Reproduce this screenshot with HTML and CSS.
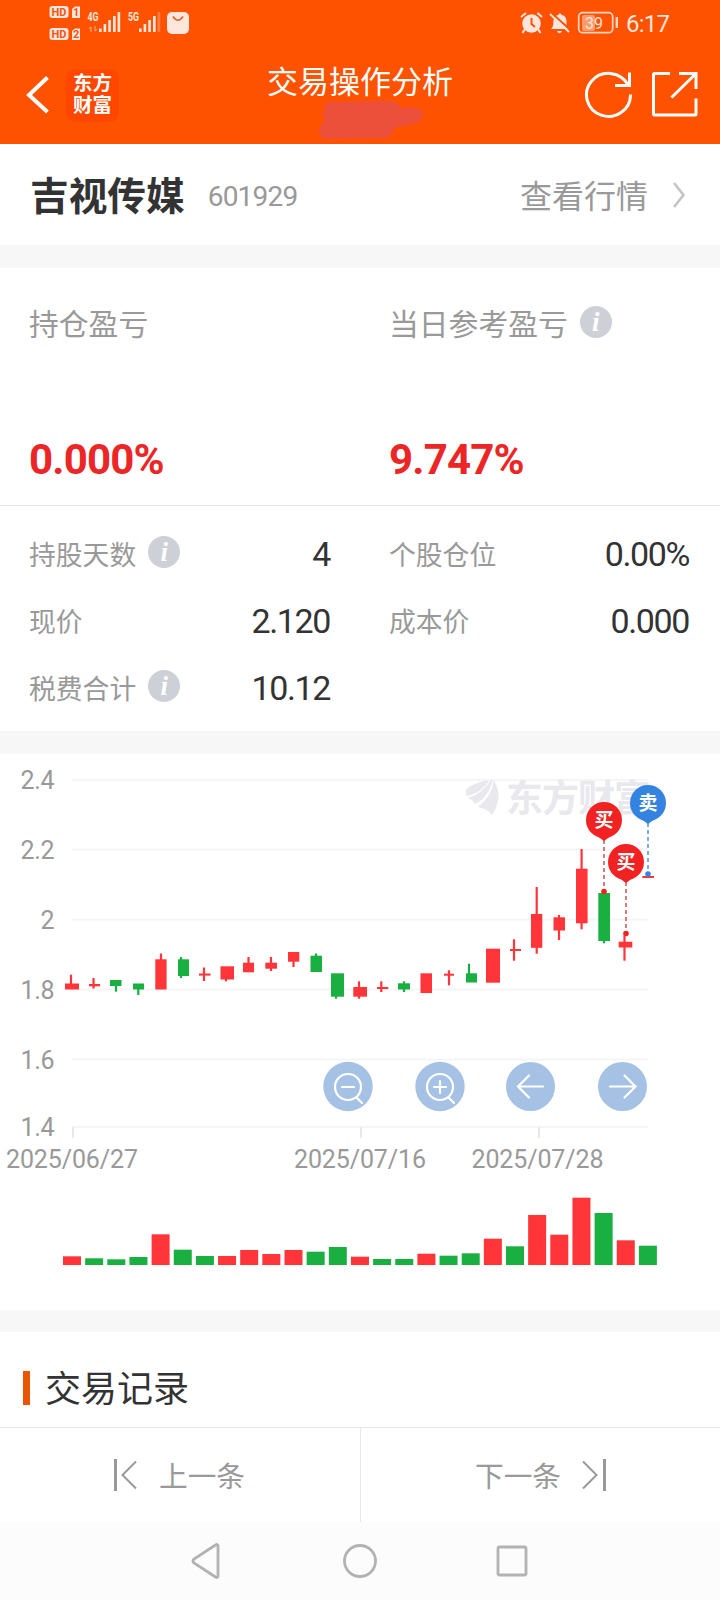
FILE: index.html
```
<!DOCTYPE html>
<html lang="zh-CN">
<head>
  <meta charset="UTF-8">
  <meta name="viewport" content="width=device-width, initial-scale=1.0">
  <title>交易操作分析</title>
  <link rel="stylesheet" href="styles.css">
</head>
<body>
  <header class="header">
    <div class="status-bar">
      <svg class="status-left" width="150" height="40" viewBox="45 0 150 40">
        <g fill="#ffe6dc">
          <rect x="49.5" y="6" width="19" height="12" rx="3"/>
          <path d="M72 9l3-2.500h5V18h-8z"/>
          <rect x="49.5" y="28" width="19" height="12" rx="3"/>
          <path d="M72 31l3-2.500h5V40h-8z"/>
          <rect x="167" y="12" width="22" height="22" rx="5"/>
          <rect x="99" y="28.500" width="2.600" height="3.500"/>
          <rect x="103.600" y="24" width="2.600" height="8"/>
          <rect x="108.300" y="20" width="2.600" height="12"/>
          <rect x="113" y="16" width="2.600" height="16"/>
          <rect x="117.600" y="12" width="2.600" height="20"/>
          <rect x="139" y="28.500" width="2.600" height="3.500"/>
          <rect x="143.600" y="24" width="2.600" height="8"/>
          <rect x="148.300" y="20" width="2.600" height="12"/>
          <rect x="153" y="16" width="2.600" height="16"/>
          <rect x="157.600" y="12" width="2.600" height="20" opacity=".3"/>
        </g>
        <path d="M173 16.500q5 7.500 10 0" fill="none" stroke="#e85a1c" stroke-width="1.500"/>
        <path d="M91 32v-5l-2 1.500M95 26v5l2-1.500" fill="none" stroke="#ffb08a" stroke-width="1"/>
        <g class="status-hd">
          <text x="51.500" y="16" textLength="15">HD</text>
          <text x="73" y="16.300">1</text>
          <text x="51.500" y="38" textLength="15">HD</text>
          <text x="73" y="38.300">2</text>
        </g>
        <g class="status-net">
          <text x="87.500" y="21" textLength="11" lengthAdjust="spacingAndGlyphs">4G</text>
          <text x="128" y="21" textLength="11" lengthAdjust="spacingAndGlyphs">5G</text>
        </g>
      </svg>
      <svg width="160" height="40" viewBox="515 0 160 40">
        <g fill="#ffe6dc">
          <circle cx="531.500" cy="23.500" r="9.300"/>
          <path d="M525 29l-2.500 4M538 29l2.500 4" stroke="#ffe6dc" stroke-width="2"/>
          <path d="M521 17l5-4M537.500 13l4.500 4" stroke="#ffe6dc" stroke-width="2"/>
          <path d="M551 29c3-3 2-6 2.500-9 .5-3 3-5 5-5 0-2 3-2 3 0 3 0 5 3 5 6 0 4 0 5 2.500 8z"/>
          <path d="M557 31h5q-2.500 4.500-5 0z"/>
        </g>
        <path d="M531.500 18v6l3.500 3" fill="none" stroke="#ff5200" stroke-width="2"/>
        <path d="M551.500 13l19 17" stroke="#ff5200" stroke-width="2"/>
        <path d="M550 14l19 18" stroke="#ffe6dc" stroke-width="1.800"/>
        <rect x="582" y="15" width="13" height="16" rx="2" fill="#ff9a6b"/>
        <rect x="578.700" y="12.700" width="34" height="20" rx="4" fill="none" stroke="#ffd6c4" stroke-width="1.700"/>
        <path d="M616.800 17v11" stroke="#ffd6c4" stroke-width="2.400"/>
        <text class="battery" x="585" y="28.500" textLength="18">39</text>
        <text class="clock" x="626" y="32" textLength="44">6:17</text>
      </svg>
    </div>
    <div class="navbar">
      <div class="nav-left">
        <svg width="24" height="42" viewBox="0 0 24 42"><path d="M22.500 3.500L4 21l18.500 17" fill="none" stroke="#fff" stroke-width="4"/></svg>
        <div class="brand"><span>东方</span><span>财富</span></div>
      </div>
      <div class="nav-center">
        <h1>交易操作分析</h1>
        <svg class="smudge" width="108" height="40" viewBox="0 0 108 40">
          <path d="M9 2l61-1q12 0 12 7 24-3 23 7-1 9-21 11-9 1-10 7-2 6-11 5L9 39Q0 37 1 29q1-5 6-6-3-8-1-14z" fill="#ec503b"/>
        </svg>
      </div>
      <div class="nav-right">
        <svg width="48" height="48" viewBox="0 0 48 48" fill="none" stroke="#fff" stroke-width="3">
          <path d="M46.500 23.500A22 21.500 0 1 1 43.500 13"/>
          <path d="M45.500 1.500v13H31"/>
        </svg>
        <svg width="48" height="48" viewBox="0 0 48 48" fill="none" stroke="#fff" stroke-width="3">
          <path d="M20 2.500H4.500q-1 0-1 1V43q0 1 1 1H45q1 0 1-1V27.500"/>
          <path d="M29 2.500h17V18M46 2.500L21.500 26.500"/>
        </svg>
      </div>
    </div>
  </header>

  <section class="stock">
    <h2>吉视传媒</h2>
    <span class="code">601929</span>
    <a class="quote">查看行情</a>
    <svg width="14" height="28" viewBox="0 0 14 28"><path d="M2 2l9.500 12L2 26" fill="none" stroke="#c4c4c4" stroke-width="2.600"/></svg>
  </section>

  <section class="profit">
    <div class="profit-item">
      <p>持仓盈亏</p>
      <strong>0.000%</strong>
    </div>
    <div class="profit-item">
      <p>当日参考盈亏<i class="info">i</i></p>
      <strong>9.747%</strong>
    </div>
  </section>

  <section class="details">
    <div class="detail"><span>持股天数<i class="info">i</i></span><b>4</b></div>
    <div class="detail"><span>个股仓位</span><b>0.00%</b></div>
    <div class="detail"><span>现价</span><b>2.120</b></div>
    <div class="detail"><span>成本价</span><b>0.000</b></div>
    <div class="detail"><span>税费合计<i class="info">i</i></span><b>10.12</b></div>
  </section>

  <section class="chart">
    <svg id="chart" width="720" height="556" viewBox="0 754 720 556">
      <g id="grid"></g>
      <g class="watermark">
        <path d="M466 789q10-7 23-9-1 3-3 5-8 9-20 11zM468 798q14-4 23-18h2q-5 18-18 24-2-4-7-6zM478 807q14-11 16-27 6 11 4 20-1 8-6 15-4-6-14-8z"/>
        <text x="506" y="812" textLength="145">东方财富</text>
      </g>
      <g id="candles"></g>
      <g id="volumes"></g>
      <g id="markers"></g>
      <g class="tool">
        <circle cx="348" cy="1086.500" r="24.700"/>
        <circle class="line" cx="348" cy="1087" r="13"/>
        <path class="line" d="M342 1087h12M356.500 1097.500l5.500 5.500"/>
      </g>
      <g class="tool">
        <circle cx="440" cy="1086.500" r="24.700"/>
        <circle class="line" cx="440" cy="1087" r="13"/>
        <path class="line" d="M434 1087h12M440 1081v12M448.500 1097.500l5.500 5.500"/>
      </g>
      <g class="tool">
        <circle cx="530.500" cy="1086.500" r="24.500"/>
        <path class="line" d="M543 1086.500h-25M529 1075.500l-11 11 11 11"/>
      </g>
      <g class="tool">
        <circle cx="622.500" cy="1086.500" r="24.500"/>
        <path class="line" d="M610 1086.500h25M624.500 1075.500l11 11-11 11"/>
      </g>
    </svg>
  </section>

  <section class="records">
    <h3><span>交易记录</span></h3>
  </section>

  <div class="pager">
    <div class="pager-item">
      <svg width="26" height="34" viewBox="0 0 26 34" fill="none" stroke="#999"><path d="M2.500 1v32" stroke-width="3"/><path d="M23 3.500L9.500 17 23 30.500" stroke-width="2"/></svg>
      <span>上一条</span>
    </div>
    <div class="pager-item">
      <span>下一条</span>
      <svg width="26" height="34" viewBox="0 0 26 34" fill="none" stroke="#999"><path d="M23.500 1v32" stroke-width="3"/><path d="M2 3.500L15.500 17 2 30.500" stroke-width="2"/></svg>
    </div>
  </div>

  <nav class="system-nav">
    <svg width="36" height="36" viewBox="0 0 36 36"><path d="M28 2.500v31q-1 1.500-2.500.5L4 20q-2-2 0-4L25.500 2q1.500-1 2.500.5z"/></svg>
    <svg width="36" height="36" viewBox="0 0 36 36"><circle cx="18" cy="18" r="15.500"/></svg>
    <svg width="36" height="36" viewBox="0 0 36 36"><rect x="4" y="4" width="28" height="28" rx="1.500"/></svg>
  </nav>

  <script src="chart.js"></script>
</body>
</html>
```
FILE: styles.css
```
* {
  box-sizing: border-box;
}

body {
  margin: 0;
  padding: 0;
  width: 720px;
  height: 1600px;
  overflow: hidden;
  display: flex;
  flex-direction: column;
  font-family: Roboto, "Noto Sans CJK SC", sans-serif;
  background-color: #f7f7f7;
  color: #333;
}

h1, h2, h3, p {
  margin: 0;
  font-weight: normal;
}

svg {
  display: block;
}

.header {
  height: 144px;
  background-color: #ff5200;
  color: #fff;
}

.status-bar {
  display: flex;
  justify-content: space-between;
  height: 46px;
  padding: 0 45px;
}

.status-left {
  overflow: visible;
}

.status-hd {
  font-size: 11px;
  font-weight: bold;
  fill: #f0560f;
}

.status-net {
  font-size: 12px;
  font-weight: bold;
  fill: #ffe6dc;
}

.battery {
  font-size: 16px;
  fill: #ffe6dc;
}

.clock {
  font-size: 24px;
  fill: #ffe6dc;
}

.navbar {
  display: grid;
  grid-template-columns: 1fr auto 1fr;
  height: 98px;
  padding: 0 22px 0 25px;
}

.nav-left {
  display: flex;
  align-items: center;
  gap: 17px;
}

.brand {
  display: flex;
  flex-direction: column;
  align-items: center;
  justify-content: center;
  width: 53px;
  height: 53px;
  border-radius: 9px;
  background-color: #ff4700;
  font-size: 19.5px;
  line-height: 22px;
  font-weight: bold;
}

.nav-center {
  display: flex;
  flex-direction: column;
  align-items: center;
  padding-top: 14px;
  margin-left: -3px;
}

.nav-center h1 {
  font-size: 31px;
  line-height: 46px;
}

.smudge {
  margin: -6px 0 0 23px;
}

.nav-right {
  display: flex;
  align-items: center;
  justify-content: flex-end;
  gap: 18px;
}

.stock {
  display: flex;
  align-items: center;
  height: 101px;
  padding: 0 34px 0 30px;
  background-color: #fff;
}

.stock h2 {
  margin-top: -3px;
  font-size: 38.7px;
  font-weight: bold;
}

.code {
  margin: 3px 0 0 23px;
  font-size: 28px;
  letter-spacing: -0.8px;
  color: #999;
}

.quote {
  margin: -2px 24px 0 auto;
  font-size: 32px;
  color: #999;
}

.profit {
  display: grid;
  grid-template-columns: 1fr 1fr;
  height: 238px;
  margin-top: 23px;
  padding: 32px 0 0 29px;
  column-gap: 29px;
  background-color: #fff;
  border-bottom: 1px solid #e8e8e8;
}

.profit-item p {
  display: flex;
  align-items: center;
  height: 44px;
  font-size: 29.8px;
  color: #999;
}

.profit-item strong {
  display: block;
  margin-top: 91px;
  font-size: 42px;
  line-height: 50px;
  letter-spacing: -0.8px;
  color: #ec2527;
}

.info {
  display: flex;
  align-items: center;
  justify-content: center;
  width: 32px;
  height: 32px;
  margin: 0 0 0 12px;
  border-radius: 50%;
  background-color: #cdd0d6;
  color: #fff;
  font: italic bold 27px/32px "Liberation Serif", serif;
}

.details {
  display: grid;
  grid-template-columns: 301px 300px;
  grid-auto-rows: 67px;
  column-gap: 59px;
  height: 225px;
  padding: 14px 29px 0 29px;
  background-color: #fff;
}

.detail {
  display: flex;
  align-items: center;
  justify-content: space-between;
}

.detail span {
  display: flex;
  align-items: center;
  margin-top: -1px;
  font-size: 26.8px;
  color: #999;
}

.detail .info {
  margin-top: -2px;
}

.detail b {
  font-size: 34px;
  font-weight: normal;
  letter-spacing: -1.4px;
}

.chart {
  height: 556px;
  margin-top: 23px;
  background-color: #fff;
}

.grid-line {
  stroke: #f5f5f5;
  stroke-width: 2;
}

.tick {
  stroke: #e8e8e8;
  stroke-width: 2;
}

.axis-label {
  font-size: 25px;
  fill: #999;
}

.watermark {
  fill: #e8e8ed;
  font-size: 37px;
  font-weight: bold;
}

.red {
  fill: #ff3539;
}

.green {
  fill: #1ab041;
}

.pin {
  font-size: 19px;
  font-weight: bold;
  text-anchor: middle;
}

.buy {
  fill: #f32222;
  stroke: #c03a3a;
}

.sell {
  fill: #3583e0;
  stroke: #3d83c9;
}

.pin text {
  fill: #fff;
  stroke: none;
}

.pin path, .pin circle {
  stroke: none;
}

.tool circle {
  fill: #a5c2e5;
}

.tool .line {
  fill: none;
  stroke: #fff;
  stroke-width: 2.2;
  stroke-linecap: round;
}

.records {
  display: flex;
  align-items: center;
  height: 95px;
  margin-top: 22px;
  padding: 17px 23px 0;
  background-color: #fff;
}

.records h3 {
  display: flex;
  align-items: center;
  font-size: 36px;
  line-height: 48px;
}

.records span {
  padding-top: 4px;
}

.records h3::before {
  content: "";
  width: 7px;
  height: 34px;
  margin-right: 15px;
  background-color: #e95504;
}

.pager {
  display: flex;
  height: 95px;
  border-top: 1px solid #e8e8e8;
  background-color: #fff;
}

.pager-item {
  flex: 1;
  display: flex;
  align-items: center;
  justify-content: center;
  gap: 20px;
  padding-right: 2px;
  font-size: 28.7px;
  color: #999;
}

.pager-item span {
  margin-top: -2px;
}

.pager-item + .pager-item {
  padding: 0 0 0 1px;
  border-left: 1px solid #e8e8e8;
}

.system-nav {
  display: flex;
  justify-content: center;
  gap: 116px;
  height: 78px;
  padding-top: 21px;
  background-color: #fcfcfc;
}

.system-nav svg {
  fill: none;
  stroke: #b2b2b2;
  stroke-width: 2.8;
}
```
FILE: chart.js
```
// left, right, body top, body bottom, wick x, high, low, colour
var candles = [
  [65, 79, 983.5, 989.5, 71, 974.7, 989, 'red'],
  [89, 100, 984, 986.3, 93.5, 978, 988.5, 'red'],
  [110, 121.5, 980, 986, 116, 980, 991.7, 'green'],
  [133, 144, 983.5, 989.5, 138.3, 984, 995, 'green'],
  [155.3, 166.6, 959.3, 989.5, 161, 953.5, 989, 'red'],
  [178, 189, 959.3, 976, 181, 957, 978, 'green'],
  [199, 210.5, 973.5, 975.6, 204, 967.5, 981, 'red'],
  [220.5, 234, 966.3, 979.5, 226, 967, 981.3, 'red'],
  [243, 254, 962.7, 972.3, 248.5, 957, 972, 'red'],
  [265.3, 277, 962.7, 968.7, 271, 957, 971, 'red'],
  [288, 299.3, 952, 961.7, 293.5, 953, 967, 'red'],
  [310.5, 322, 955.7, 972, 316, 953.5, 971, 'green'],
  [331, 344, 973.3, 996.7, 336, 974, 998.7, 'green'],
  [353.3, 367, 987, 996.7, 359, 981.3, 998.7, 'red'],
  [377, 388.3, 987, 989, 381.3, 981.3, 992, 'red'],
  [398, 410, 983.3, 989.5, 404, 981.3, 992, 'green'],
  [420.5, 432, 973.3, 993, 426, 974, 992, 'red'],
  [444, 454, 973.7, 975.7, 449, 970.3, 985.3, 'red'],
  [466, 477, 973.3, 982.5, 469, 963.7, 982, 'green'],
  [486, 500, 948.7, 982.7, 493, 949, 982, 'red'],
  [510, 521, 949, 951, 514, 939.3, 960.7, 'red'],
  [531, 542.3, 914, 947.8, 536.7, 887, 953.7, 'red'],
  [553.5, 565, 917.3, 930.5, 559, 915, 940, 'red'],
  [576, 587.6, 868.7, 923.3, 581.6, 849, 929.3, 'red'],
  [598.3, 610, 893, 941, 604, 894, 943.3, 'green'],
  [618.7, 632.3, 941.7, 947.5, 624.5, 935.3, 960.7, 'red'],
  [642.3, 654, 876, 878, 648, 876, 878, 'red']
];

var volumes = [8.7, 6.7, 5.7, 8, 30.7, 15.3, 9, 9, 15, 11, 15, 13.3, 18, 8.3, 6, 6,
  11.3, 9.3, 11.7, 26.3, 18.7, 50, 30.3, 67.3, 52, 24.7, 19.3];
var volumeColors = 'RGGGRGGRRRRGGRGGRGGRGRRRGRG';

var priceLines = [['2.4', 780, 32], ['2.2', 849.5, 32], ['2', 919.5, 0], ['1.8', 989.5, 32], ['1.6', 1059.5, 32], ['1.4', 1127, 32]];
var dates = [['2025/06/27', 73, 6], ['2025/07/16', 361, 294], ['2025/07/28', 539, 471.5]];

// pin x, pin centre y, point y, label, class
var markers = [
  [604, 820, 891.5, '买', 'buy'],
  [626, 862, 933.5, '买', 'buy'],
  [648, 803, 874, '卖', 'sell']
];

var grid = '';
priceLines.forEach(function(p) {
  grid += `<line class="grid-line" x1="72" x2="648" y1="${p[1]}" y2="${p[1]}"/>`;
  var fit = p[2] ? `textLength="${p[2] + 2}"` : '';
  grid += `<text class="axis-label" text-anchor="end" x="54.5" y="${p[1] + 9}" ${fit}>${p[0]}</text>`;
});
dates.forEach(function(d) {
  grid += `<line class="tick" x1="${d[1]}" x2="${d[1]}" y1="1127" y2="1138"/>`;
  grid += `<text class="axis-label" x="${d[2]}" y="1167.5" textLength="132">${d[0]}</text>`;
});
document.getElementById('grid').innerHTML = grid;

document.getElementById('candles').innerHTML = candles.map(function(c) {
  return `<g class="${c[7]}"><rect x="${c[4] - 1.1}" y="${c[5]}" width="2.2" height="${c[6] - c[5]}"/>` +
    `<rect x="${c[0]}" y="${c[2]}" width="${c[1] - c[0]}" height="${c[3] - c[2]}"/></g>`;
}).join('');

document.getElementById('volumes').innerHTML = volumes.map(function(v, i) {
  var color = volumeColors[i] === 'R' ? 'red' : 'green';
  return `<rect class="${color}" x="${63 + i * 22.15}" y="${1265 - v}" width="18" height="${v}"/>`;
}).join('');

document.getElementById('markers').innerHTML = markers.map(function(m) {
  var x = m[0], y = m[1];
  return `<g class="pin ${m[4]}"><line x1="${x}" x2="${x}" y1="${y + 20}" y2="${m[2]}" stroke-width="1.3" stroke-dasharray="4 3"/>` +
    `<circle cx="${x}" cy="${m[2]}" r="2.8"/>` +
    `<circle cx="${x}" cy="${y}" r="18"/><path d="M${x - 15} ${y + 10}L${x} ${y + 21}L${x + 15} ${y + 10}z"/>` +
    `<text x="${x}" y="${y + 7}">${m[3]}</text></g>`;
}).join('');
```
